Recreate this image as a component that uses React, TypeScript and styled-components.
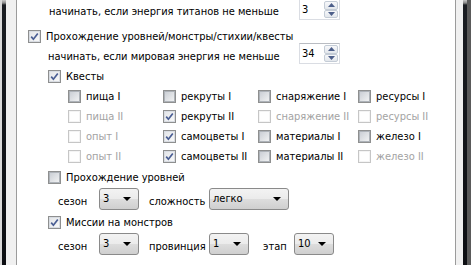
import React from 'react';
import styled, { createGlobalStyle } from 'styled-components';

const GlobalStyle = createGlobalStyle`
  html, body { margin: 0; padding: 0; background: #fff; }
  body {
    width: 471px;
    height: 265px;
    overflow: hidden;
    font-family: "DejaVu Sans Condensed", "DejaVu Sans", sans-serif;
    font-size: 11px;
    color: #000;
  }
`;

const Window = styled.div`
  display: flex;
  width: 471px;
  height: 265px;
  overflow: hidden;
`;

const Strip = styled.div<{ $w: number; $color: string }>`
  flex: 0 0 ${(p) => p.$w}px;
  background: ${(p) => p.$color};
`;

const DarkBar = styled.div<{ $w: number }>`
  flex: 0 0 ${(p) => p.$w}px;
  background: linear-gradient(#c8c8c8 0, #8a8a8a 3px, #1a1d22 5px, #0c0e12 100%);
`;

const Content = styled.div`
  flex: 1;
  display: flex;
  flex-direction: column;
  background: #fff;
  overflow: hidden;
`;

const Row = styled.div<{ $top: number; $indent: number; $h: number }>`
  display: flex;
  align-items: center;
  flex: 0 0 ${(p) => p.$h}px;
  margin-top: ${(p) => p.$top}px;
  padding-left: ${(p) => p.$indent}px;
`;

const Text = styled.span<{ $w?: number; $gap?: number; $drop?: number; $disabled?: boolean }>`
  display: inline-block;
  flex: 0 0 auto;
  width: ${(p) => (p.$w ? `${p.$w}px` : 'auto')};
  margin-left: ${(p) => p.$gap ?? 0}px;
  padding-top: ${(p) => p.$drop ?? 0}px;
  color: ${(p) => (p.$disabled ? '#a3a3a3' : '#000')};
  white-space: nowrap;
`;

/* ---------- checkbox ---------- */

const Box = styled.span<{ $disabled?: boolean; $checked?: boolean }>`
  box-sizing: border-box;
  flex: 0 0 13px;
  width: 13px;
  height: 13px;
  border: 1px solid ${(p) => (p.$disabled ? '#c6c6c6' : '#8e8f8f')};
  padding: 1px;
  background: #fff;
  display: flex;
`;

const BoxInner = styled.span<{ $disabled?: boolean; $checked?: boolean }>`
  flex: 1;
  display: flex;
  align-items: center;
  justify-content: center;
  border: 1px solid ${(p) => (p.$disabled ? '#f4f4f4' : p.$checked ? '#d8dce2' : '#aeb3b9')};
  background: ${(p) =>
    p.$disabled
      ? '#fff'
      : p.$checked
      ? 'linear-gradient(135deg, #e4e6e9, #f8f8f8)'
      : 'linear-gradient(135deg, #cbcfd5, #f0f1f2)'};
`;

const CheckLabel = styled.span<{ $disabled?: boolean }>`
  margin-left: 5px;
  color: ${(p) => (p.$disabled ? '#a3a3a3' : '#000')};
  white-space: nowrap;
`;

const CheckWrap = styled.span<{ $w?: number }>`
  display: flex;
  align-items: center;
  flex: 0 0 ${(p) => (p.$w ? `${p.$w}px` : 'auto')};
`;

function Check({
  label,
  checked,
  disabled,
  w,
}: {
  label: string;
  checked?: boolean;
  disabled?: boolean;
  w?: number;
}) {
  return (
    <CheckWrap $w={w}>
      <Box $disabled={disabled} $checked={checked}>
        <BoxInner $disabled={disabled} $checked={checked} style={{ margin: -1 }}>
          {checked && (
            <svg width="9" height="9" viewBox="0 0 9 9">
              <path d="M1.2 4.6 L3.4 7.2 L7.8 1.4" fill="none" stroke="#4a5e94" strokeWidth="1.7" />
            </svg>
          )}
        </BoxInner>
      </Box>
      <CheckLabel $disabled={disabled}>{label}</CheckLabel>
    </CheckWrap>
  );
}

/* ---------- spin edit ---------- */

const Spin = styled.div`
  box-sizing: border-box;
  display: flex;
  flex: 0 0 41px;
  height: 21px;
  border: 1px solid #dadde3;
  border-top-color: #b9bcc2;
  background: #fff;
`;

const SpinValue = styled.span`
  flex: 1;
  padding-left: 2px;
  line-height: 19px;
`;

const SpinButtons = styled.div`
  display: flex;
  flex-direction: column;
  flex: 0 0 15px;
  padding: 1px 1px 1px 0;
  box-sizing: border-box;
`;

const SpinButton = styled.div`
  flex: 1;
  display: flex;
  align-items: center;
  justify-content: center;
  border: 1px solid #c4ccd6;
  border-radius: 2px;
  background: linear-gradient(#f7f8fa, #e3e7ec);
`;

function SpinEdit({ value }: { value: string }) {
  return (
    <Spin>
      <SpinValue>{value}</SpinValue>
      <SpinButtons>
        <SpinButton>
          <svg width="7" height="4" viewBox="0 0 7 4">
            <path d="M0 4 L3.5 0 L7 4 Z" fill="#4d5f8a" />
          </svg>
        </SpinButton>
        <SpinButton>
          <svg width="7" height="4" viewBox="0 0 7 4">
            <path d="M0 0 L7 0 L3.5 4 Z" fill="#4d5f8a" />
          </svg>
        </SpinButton>
      </SpinButtons>
    </Spin>
  );
}

/* ---------- combo box ---------- */

const Combo = styled.div<{ $w: number }>`
  box-sizing: border-box;
  display: flex;
  align-items: center;
  flex: 0 0 ${(p) => p.$w}px;
  height: 22px;
  padding: 0 7px 0 3px;
  border: 1px solid #8a8a8a;
  border-radius: 3px;
  background: linear-gradient(#f3f3f3 0%, #ebebeb 50%, #dddddd 51%, #cfcfcf 100%);
`;

const ComboValue = styled.span`
  flex: 1;
  padding-bottom: 2px;
`;

function ComboBox({ value, w }: { value: string; w: number }) {
  return (
    <Combo $w={w}>
      <ComboValue>{value}</ComboValue>
      <svg width="8" height="4" viewBox="0 0 8 4">
        <path d="M0 0 L8 0 L4 4 Z" fill="#000" />
      </svg>
    </Combo>
  );
}

/* ---------- quest grid ---------- */

const Grid = styled.div`
  display: grid;
  grid-template-columns: 95px 95px 100px auto;
  grid-auto-rows: 13px;
  row-gap: 7px;
  margin-top: 7px;
  padding-left: 51px;
`;

type Q = { label: string; checked?: boolean; disabled?: boolean };

const quests: Q[] = [
  { label: 'пища I' },
  { label: 'рекруты I' },
  { label: 'снаряжение I' },
  { label: 'ресурсы I' },
  { label: 'пища II', disabled: true },
  { label: 'рекруты II', checked: true },
  { label: 'снаряжение II', disabled: true },
  { label: 'ресурсы II', disabled: true },
  { label: 'опыт I', disabled: true },
  { label: 'самоцветы I', checked: true },
  { label: 'материалы I' },
  { label: 'железо I' },
  { label: 'опыт II', disabled: true },
  { label: 'самоцветы II', checked: true },
  { label: 'материалы II' },
  { label: 'железо II', disabled: true },
];

export default function App() {
  return (
    <>
      <GlobalStyle />
      <Window>
        <Strip $w={2} $color="#d9d9d9" />
        <DarkBar $w={4} />
        <Strip $w={10} $color="#f0f0f0" />
        <Strip $w={1} $color="#9b9b9b" />
        <Content>
          <Row $top={-1} $indent={32} $h={21}>
            <Text $w={250} $drop={4}>начинать, если энергия титанов не меньше</Text>
            <SpinEdit value="3" />
          </Row>
          <Row $top={10} $indent={11} $h={13}>
            <Check label="Прохождение уровней/монстры/стихии/квесты" checked />
          </Row>
          <Row $top={0} $indent={31} $h={21}>
            <Text $w={251} $drop={6}>начинать, если мировая энергия не меньше</Text>
            <SpinEdit value="34" />
          </Row>
          <Row $top={6} $indent={31} $h={13}>
            <Check label="Квесты" checked />
          </Row>
          <Grid>
            {quests.map((q) => (
              <Check key={q.label} label={q.label} checked={q.checked} disabled={q.disabled} />
            ))}
          </Grid>
          <Row $top={8} $indent={31} $h={13}>
            <Check label="Прохождение уровней" />
          </Row>
          <Row $top={4} $indent={41} $h={22}>
            <Text $w={41} $drop={4}>сезон</Text>
            <ComboBox value="3" w={40} />
            <Text $w={60} $gap={10} $drop={4}>сложность</Text>
            <ComboBox value="легко" w={80} />
          </Row>
          <Row $top={6} $indent={31} $h={13}>
            <Check label="Миссии на монстров" checked />
          </Row>
          <Row $top={4} $indent={41} $h={22}>
            <Text $w={41} $drop={4}>сезон</Text>
            <ComboBox value="3" w={40} />
            <Text $w={60} $gap={10} $drop={4}>провинция</Text>
            <ComboBox value="1" w={40} />
            <Text $w={31} $gap={14} $drop={4}>этап</Text>
            <ComboBox value="10" w={40} />
          </Row>
        </Content>
        <Strip $w={1} $color="#9b9b9b" />
        <Strip $w={7} $color="#f0f0f0" />
        <DarkBar $w={4} />
        <Strip $w={4} $color="#5a5a5a" />
      </Window>
    </>
  );
}
